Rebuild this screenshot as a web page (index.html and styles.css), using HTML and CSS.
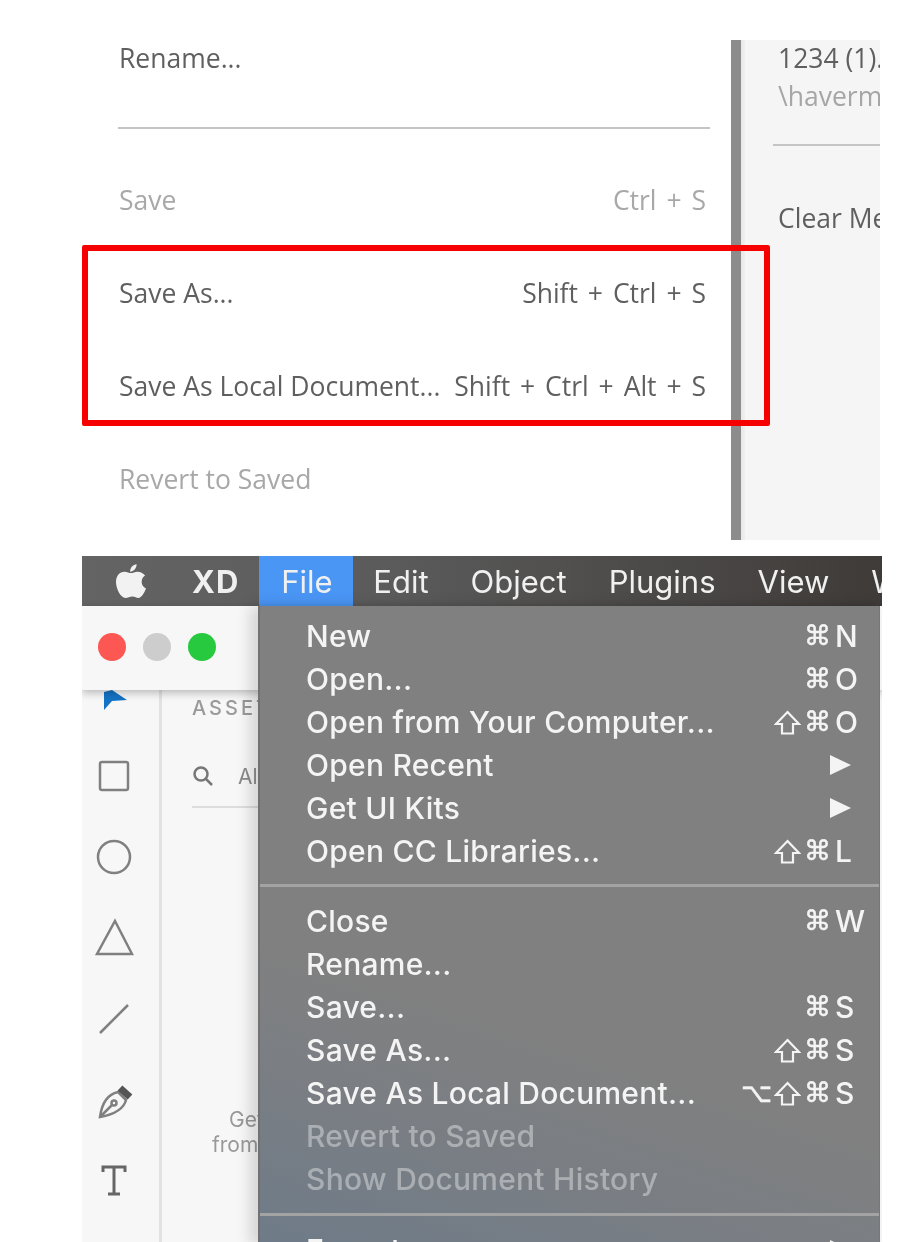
FILE: index.html
```html
<!DOCTYPE html>
<html lang="en">
<head>
<meta charset="utf-8">
<title>Adobe XD save menus</title>
<link rel="stylesheet" href="styles.css">
</head>
<body>
<section class="win-shot">
  <div class="win-menu">
    <div class="win-row first"><span>Rename...</span></div>
    <div class="win-sep"></div>
    <div class="win-row off"><span>Save</span><span class="win-keys">Ctrl + S</span></div>
    <div class="win-row"><span>Save As...</span><span class="win-keys">Shift + Ctrl + S</span></div>
    <div class="win-row"><span>Save As Local Document...</span><span class="win-keys">Shift + Ctrl + Alt + S</span></div>
    <div class="win-row off"><span>Revert to Saved</span></div>
  </div>
  <div class="win-split"></div>
  <div class="win-side">
    <div class="side-name">1234 (1).xd</div>
    <div class="side-path">\havermeyer</div>
    <div class="side-sep"></div>
    <div class="side-clear">Clear Menu</div>
  </div>
  <div class="red-box"></div>
</section>

<section class="mac-shot">
  <header class="mac-bar">
    <svg class="apple" viewBox="0 0 32 38" width="30" height="36"><path d="M22 1c0 4-3 8-7 8 0-4 3-8 7-8zM16 10.500c2 0 4-1.500 7-1.500 3 0 6 1.500 8 4-5 3-5 11 1 14-2 5-5 10-8 10-2.500 0-3.500-1.500-6.500-1.500S13 37 10 37C5 37 0 27 0 20 0 13 4 9 9 9c3 0 5 1.500 7 1.500z"/></svg>
    <span class="bar-xd">XD</span>
    <span class="bar-file">File</span>
    <span>Edit</span>
    <span>Object</span>
    <span>Plugins</span>
    <span>View</span>
    <span>Window</span>
  </header>
  <div class="app">
    <div class="title-bar">
      <i class="light red"></i><i class="light grey"></i><i class="light green"></i>
    </div>
    <div class="app-body">
      <nav class="tools">
        <svg class="tool-arrow" viewBox="0 0 26 25" width="26" height="25"><path class="fill-blue" d="M10 0 25 10 10 11 2 20V2z"/></svg>
        <svg class="tool" viewBox="0 0 40 40"><rect x="6" y="6" width="28" height="28" rx="2"/></svg>
        <svg class="tool" viewBox="0 0 40 40"><circle cx="20" cy="20" r="16"/></svg>
        <svg class="tool" viewBox="0 0 40 40"><path d="M21 3 38 36H3z"/></svg>
        <svg class="tool" viewBox="0 0 40 40"><path d="M6 34 34 6"/></svg>
        <svg class="tool pen" viewBox="0 0 40 40"><path d="M24 10 32 18C30 26 22 32 6 35 8 20 15 12 24 10zM6 35 18 23"/><circle cx="20" cy="21" r="2.500"/><path class="thick" d="M26 6 36 15"/></svg>
        <svg class="tool" viewBox="0 0 40 40"><path class="t" d="M9 11V6H31V11M20 6V33M14 33H26"/></svg>
      </nav>
      <div class="panel">
        <div class="panel-title">ASSETS</div>
        <div class="panel-search">
          <svg viewBox="0 0 22 22" width="22" height="22"><circle cx="9" cy="9" r="6.500"/><path d="M14 14 20 20"/></svg>
          <span>All Assets</span>
        </div>
        <div class="panel-hint hint-a">Get UI Kits</div>
        <div class="panel-hint hint-b">from Adobe</div>
      </div>
    </div>
  </div>
  <div class="mac-menu">
    <div class="m-row"><span class="m-label">New</span><span class="m-mods">⌘</span><span class="m-key">N</span></div>
    <div class="m-row"><span class="m-label">Open...</span><span class="m-mods">⌘</span><span class="m-key">O</span></div>
    <div class="m-row"><span class="m-label">Open from Your Computer...</span><span class="m-mods"><svg class="shift" viewBox="0 0 27 25" width="27" height="25"><path d="M13.500 2 25 14H19V23.500H8V14H2z"/></svg>⌘</span><span class="m-key">O</span></div>
    <div class="m-row"><span class="m-label">Open Recent</span><span class="m-key"><i class="tri"></i></span></div>
    <div class="m-row"><span class="m-label">Get UI Kits</span><span class="m-key"><i class="tri"></i></span></div>
    <div class="m-row"><span class="m-label">Open CC Libraries...</span><span class="m-mods"><svg class="shift" viewBox="0 0 27 25" width="27" height="25"><path d="M13.500 2 25 14H19V23.500H8V14H2z"/></svg>⌘</span><span class="m-key">L</span></div>
    <div class="m-sep"></div>
    <div class="m-row"><span class="m-label">Close</span><span class="m-mods">⌘</span><span class="m-key">W</span></div>
    <div class="m-row"><span class="m-label">Rename...</span></div>
    <div class="m-row"><span class="m-label">Save...</span><span class="m-mods">⌘</span><span class="m-key">S</span></div>
    <div class="m-row"><span class="m-label">Save As...</span><span class="m-mods"><svg class="shift" viewBox="0 0 27 25" width="27" height="25"><path d="M13.500 2 25 14H19V23.500H8V14H2z"/></svg>⌘</span><span class="m-key">S</span></div>
    <div class="m-row"><span class="m-label">Save As Local Document...</span><span class="m-mods">⌥<svg class="shift" viewBox="0 0 27 25" width="27" height="25"><path d="M13.500 2 25 14H19V23.500H8V14H2z"/></svg>⌘</span><span class="m-key">S</span></div>
    <div class="m-row off"><span class="m-label">Revert to Saved</span></div>
    <div class="m-row off"><span class="m-label">Show Document History</span></div>
    <div class="m-sep"></div>
    <div class="m-row"><span class="m-label">Export</span><span class="m-key"><i class="tri"></i></span></div>
  </div>
</section>
</body>
</html>
```
FILE: styles.css
```css
* { box-sizing: border-box; }
html, body { margin: 0; padding: 0; background: #fff; }
body { width: 918px; height: 1242px; overflow: hidden; padding: 40px 0 0 82px; }

/* Windows screenshot */
.win-shot {
  position: relative;
  display: flex;
  width: 798px;
  height: 500px;
  overflow: hidden;
  font-family: "Open Sans", sans-serif;
  font-size: 26.5px;
  color: #5f5f5f;
  background: #fff;
}
.win-menu { width: 649px; padding: 0 25px 0 37px; filter: blur(0.5px); }
.win-row { display: flex; justify-content: space-between; align-items: center; height: 93px; padding-bottom: 1px; white-space: nowrap; }
.win-row.first { height: 36px; }
.win-row.off { color: #a8a8a8; }
.win-keys { word-spacing: 3px; }
.win-sep { height: 2px; margin: 51px -4px 25px -1px; background: #c4c4c4; }
.win-split { width: 14px; background: linear-gradient(to right, #8c8c8c 0, #8c8c8c 10px, #e8e8e8 10px, #efefef 14px); }
.win-side { flex: 1; min-width: 0; background: #f5f5f5; overflow: hidden; white-space: nowrap; filter: blur(0.5px); }
.side-name { padding-left: 33px; height: 36px; line-height: 36px; }
.side-path { padding-left: 33px; height: 38px; line-height: 40px; color: #a6a6a6; }
.side-sep { margin: 30px 0 0 28px; height: 2px; background: #c4c4c4; }
.side-clear { padding-left: 33px; margin-top: 54px; height: 36px; line-height: 36px; }
.red-box {
  position: absolute;
  left: 0;
  top: 205px;
  width: 688px;
  height: 181px;
  border: 6px solid #f60000;
  border-radius: 2px;
}

/* Mac screenshot */
.mac-shot {
  position: relative;
  width: 800px;
  height: 686px;
  margin-top: 16px;
  overflow: hidden;
  font-family: "Inter", sans-serif;
}
.mac-bar {
  display: flex;
  align-items: center;
  gap: 42px;
  height: 50px;
  padding-left: 34px;
  background: linear-gradient(to right, #646464, #5a5a5a 40%, #3f3b39);
  color: #f0f0f0;
  font-size: 31px;
  white-space: nowrap;
  filter: blur(0.4px);
}
.apple { fill: #f2f2f2; flex: none; margin-right: 4px; }
.bar-xd { font-weight: 700; letter-spacing: 1px; margin-right: -22px; }
.bar-file {
  align-self: stretch;
  display: flex;
  align-items: center;
  width: 94px;
  padding: 0 22px;
  margin-right: -22px;
  background: #4a96f5;
}
.app { background: #f7f7f7; height: 636px; display: flex; flex-direction: column; }
.title-bar {
  position: relative;
  z-index: 1;
  display: flex;
  align-items: center;
  gap: 17px;
  height: 84px;
  padding: 0 0 2px 16px;
  background: #f7f7f7;
  box-shadow: 0 3px 8px rgba(0, 0, 0, 0.25);
}
.light { width: 28px; height: 28px; border-radius: 50%; }
.light.red { background: #fc5753; }
.light.grey { background: #cdcdcd; }
.light.green { background: #27c93f; }
.app-body { flex: 1; display: flex; min-height: 0; }
.tools {
  width: 80px;
  padding-left: 12px;
  display: flex;
  flex-direction: column;
  gap: 41px;
  border-right: 3px solid #e2e2e2;
  filter: blur(0.4px);
}
.tool-arrow { flex: none; margin-left: 8px; }
.fill-blue { fill: #1473c4; }
.tool { width: 40px; height: 40px; flex: none; fill: none; stroke: #808080; stroke-width: 2.500; }
.tool.pen { position: relative; top: 2px; }
.tool .thick { stroke-width: 7; stroke: #555; }
.tool .t { stroke: #666; stroke-width: 3; }
.panel { width: 96px; flex: none; padding-left: 30px; overflow: hidden; white-space: nowrap; color: #999; font-size: 21px; filter: blur(0.4px); }
.panel-title { padding-top: 6px; letter-spacing: 3px; height: 66px; font-size: 20px; font-weight: 500; }
.panel-search {
  display: flex;
  align-items: center;
  gap: 24px;
  height: 52px;
  border-bottom: 2px solid #ddd;
  padding-bottom: 10px;
  color: #8a8a8a;
}
.panel-search svg { fill: none; stroke: #777; stroke-width: 2.500; flex: none; }
.panel-hint { line-height: 25px; }
.hint-a { margin: 299px 0 0 37px; }
.hint-b { margin-left: 20px; }
.mac-menu {
  position: absolute;
  z-index: 2;
  left: 176px;
  top: 50px;
  width: 622px;
  height: 640px;
  padding-top: 8px;
  background:
    linear-gradient(18deg, #6e7b88 0%, rgba(118, 125, 134, 0.7) 18%, rgba(128, 128, 128, 0) 36%),
    #808080;
  box-shadow: -8px 0 14px rgba(0, 0, 0, 0.14);
  border-left: 2px solid #727272;
  border-right: 1px solid #777;
  color: #f4f4f4;
  font-size: 30px;
  font-weight: 500;
  letter-spacing: 0.25px;
  white-space: nowrap;
}
.m-row { display: flex; align-items: center; height: 43px; padding-left: 46px; filter: blur(0.4px); }
.m-row.off { color: rgba(255, 255, 255, 0.38); }
.m-label { flex: 1; }
.m-mods { font-family: "DejaVu Sans", sans-serif; font-size: 27px; font-weight: 400; letter-spacing: 1px; line-height: 1; -webkit-text-stroke: 0.5px #f4f4f4; }
.shift { fill: none; stroke: #f4f4f4; stroke-width: 2.200; vertical-align: -4px; margin: 0 3px 0 1px; }
.m-key { width: 34px; margin-right: 13px; padding-left: 3px; }
.tri {
  display: block;
  width: 0;
  height: 0;
  margin-left: -5px;
  border-left: 21px solid #f4f4f4;
  border-top: 10px solid transparent;
  border-bottom: 10px solid transparent;
}
.m-sep { height: 3px; margin: 12px 0; background: #a3a3a3; }
.m-row + .m-sep ~ .m-row + .m-sep { margin-top: 13px; }
```
